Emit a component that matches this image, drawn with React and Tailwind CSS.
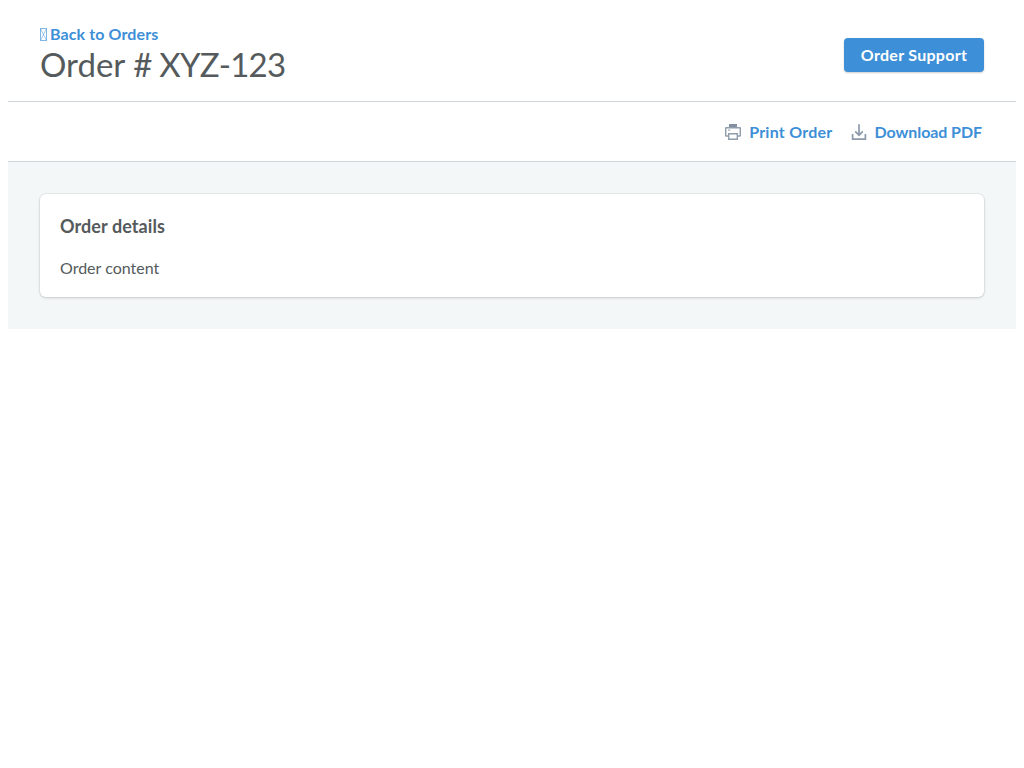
function PrintIcon() {
  return (
    <svg viewBox="0 0 16 16" className="size-4 fill-none stroke-[#919eab]" aria-hidden="true">
      <path d="M4 0h8v3H4z" className="fill-[#8290a1] stroke-none" />
      <path d="M3.5 12H1.2a.5.5 0 0 1-.5-.5V4.2a.5.5 0 0 1 .5-.5h13.6a.5.5 0 0 1 .5.5v7.3a.5.5 0 0 1-.5.5h-2.3" strokeWidth="1.4" />
      <path d="M3.7 9.7h8.6v5.6H3.7z" strokeWidth="1.4" />
      <path d="M3 5.5h2.2v1.3H3z" className="fill-[#a5b0bc] stroke-none" />
    </svg>
  );
}

function DownloadIcon() {
  return (
    <svg viewBox="0 0 16 16" className="size-4 fill-none stroke-[#8c9aaa]" aria-hidden="true">
      <path d="M8 0.2v11M4.2 7.4L8 11.2l3.8-3.8M1.6 10v5.1h12.8V10" strokeWidth="1.7" />
    </svg>
  );
}

function MissingGlyph() {
  return (
    <svg viewBox="0 0 7 13" className="h-[13px] w-[7px] fill-none stroke-[#3d8fd7]" aria-hidden="true">
      <path d="M.5.5h6v12h-6z" strokeWidth=".65" />
      <path d="M.5.5l6 12M6.5.5l-6 12" strokeWidth=".45" />
    </svg>
  );
}

export default function App() {
  return (
    <main className="m-2 font-['Lato',sans-serif] text-base text-[#555a5c]">
      <header className="flex h-[94px] items-start justify-between border-b border-[#ced4d8] px-8 pt-4">
        <div>
          <a href="#" className="flex h-5 items-center gap-[3px] font-bold leading-5 tracking-[0.11px] text-[#3d8fd7]">
            <MissingGlyph />
            <span>Back to Orders</span>
          </a>
          <h1 className="text-[33px] leading-10">
            Order <span className="tracking-[-0.75px]"># XYZ-123</span>
          </h1>
        </div>
        <button className="mt-[14px] h-[34px] w-[140px] rounded bg-[#3d8fd7] font-bold tracking-[0.28px] text-white shadow-[0_1px_2px_rgba(0,0,0,0.2)]">
          Order Support
        </button>
      </header>
      <div className="flex h-[60px] items-center justify-end gap-[18px] border-b border-[#ced4d8] pr-[34px]">
        <button className="flex items-center gap-2 font-bold leading-5 tracking-[0.25px] text-[#3d8fd7]">
          <PrintIcon />
          <span>Print Order</span>
        </button>
        <button className="flex items-center gap-2 font-bold leading-5 tracking-[-0.08px] text-[#3d8fd7]">
          <DownloadIcon />
          <span>Download PDF</span>
        </button>
      </div>
      <div className="bg-[#f3f7f8] p-8">
        <section className="h-[103px] rounded-md bg-white px-5 pt-5 shadow-[0_0_0_1px_rgba(63,63,68,0.05),0_1px_3px_rgba(63,63,68,0.2)]">
          <h2 className="text-lg font-bold leading-6 tracking-[0.08px]">Order details</h2>
          <p className="mt-5 leading-5">Order content</p>
        </section>
      </div>
    </main>
  );
}
